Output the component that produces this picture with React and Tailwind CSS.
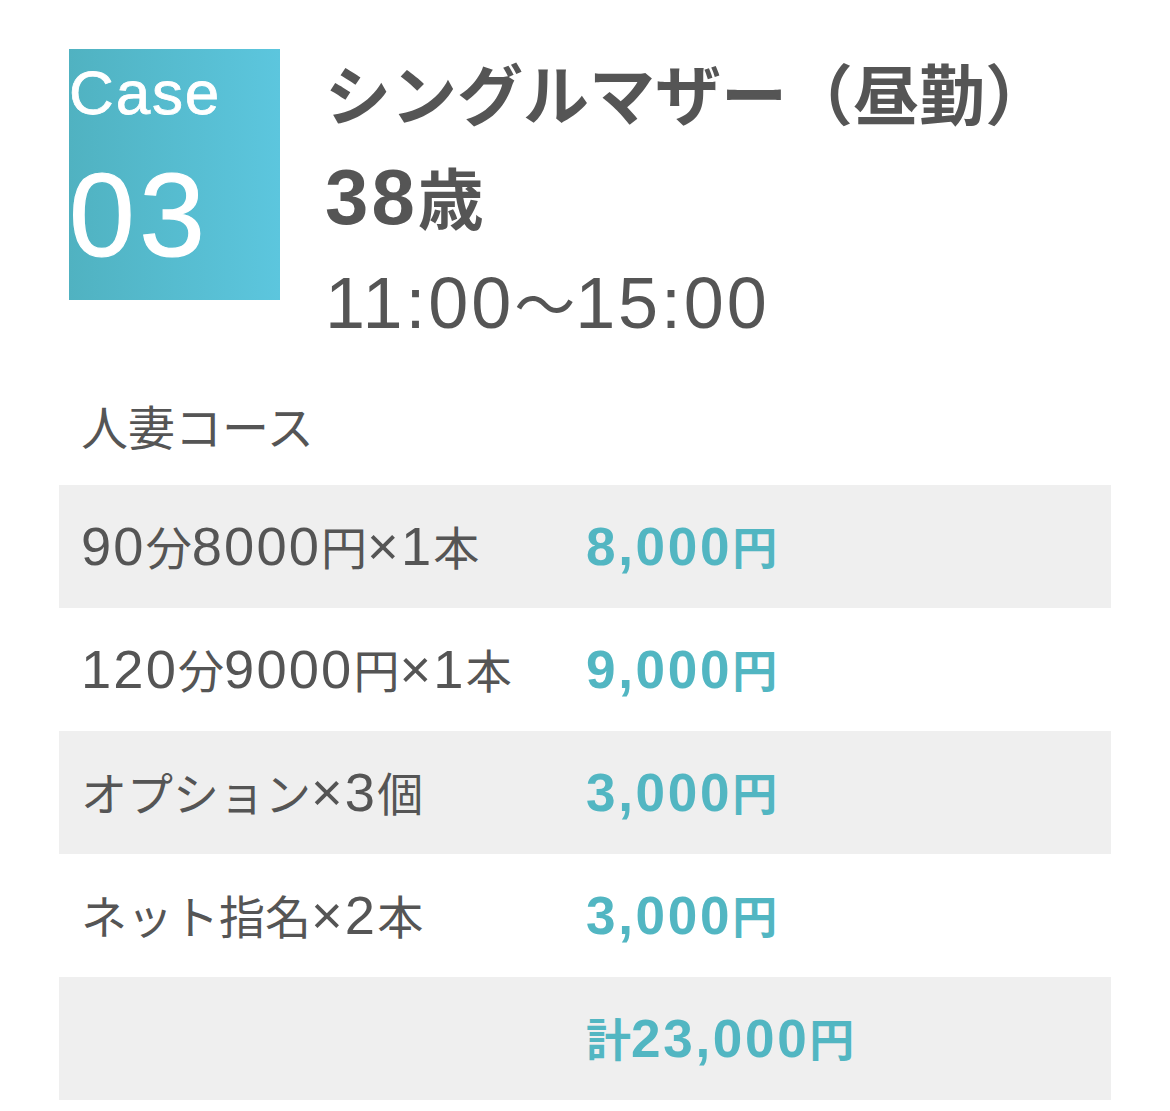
import React from 'react';

const rows = [
  { label: '90分8000円×1本', value: '8,000円', gray: true },
  { label: '120分9000円×1本', value: '9,000円', gray: false },
  { label: 'オプション×3個', value: '3,000円', gray: true },
  { label: 'ネット指名×2本', value: '3,000円', gray: false },
  { label: '', value: '計23,000円', gray: true },
];

// Latin runs get Liberation Sans, a bit larger, like Hiragino's digits
const Mix = ({ text, latin = '' }) =>
  text.split(/([0-9A-Za-z,:×]+)/).map((s, i) =>
    s === '' ? null : /[0-9A-Za-z,:×]/.test(s) ? (
      <span key={i} className={`font-['Liberation_Sans'] text-[1.18em] tracking-[0.04em] ${latin}`}>
        {s}
      </span>
    ) : (
      <span key={i}>{s}</span>
    )
  );

export default function App() {
  return (
    <div
      className="bg-white min-h-[1111px] px-[59px] pt-[49px] text-[#555]"
      style={{ fontFamily: '"Noto Sans CJK JP", "Noto Sans", sans-serif' }}
    >
      <div className="flex items-start h-[334px]">
        <div className="ml-[10px] w-[211px] h-[251px] shrink-0 bg-gradient-to-r from-[#50b2c1] to-[#5cc6de] text-white flex flex-col font-['Liberation_Sans']">
          <span className="text-[62px] leading-none mt-[13px] tracking-[0.03em] [-webkit-text-stroke:0.8px_#fff]">
            Case
          </span>
          <span className="text-[118px] leading-none mt-[32px] tracking-[0.04em] [-webkit-text-stroke:1.2px_#fff]">
            03
          </span>
        </div>
        <div className="ml-[45px] flex flex-col">
          <h2 className="text-[66px] font-bold leading-[104px] -mt-[10px] whitespace-nowrap">シングルマザー（昼勤）</h2>
          <p className="text-[66px] font-bold leading-[104px]">
            <Mix text="38歳" latin="tracking-[0.02em]" />
          </p>
          <p className="text-[61px] leading-[104px]">
            <Mix text="11:00〜15:00" latin="tracking-[0.02em]" />
          </p>
        </div>
      </div>

      <p className="mt-[12px] pl-[22px] text-[47px] leading-[60px]">人妻コース</p>

      <div className="mt-[30px]">
        {rows.map((r, i) => (
          <div
            key={i}
            className={`flex items-center h-[123px] ${r.gray ? 'bg-[#efefef]' : 'bg-white'}`}
          >
            <span className="pl-[22px] w-[527px] shrink-0 text-[46px] whitespace-nowrap">
              <Mix text={r.label} />
            </span>
            <span className="text-[45px] font-bold text-[#52b6c2] whitespace-nowrap">
              <Mix text={r.value} latin="font-bold tracking-[0.05em]" />
            </span>
          </div>
        ))}
      </div>
    </div>
  );
}
